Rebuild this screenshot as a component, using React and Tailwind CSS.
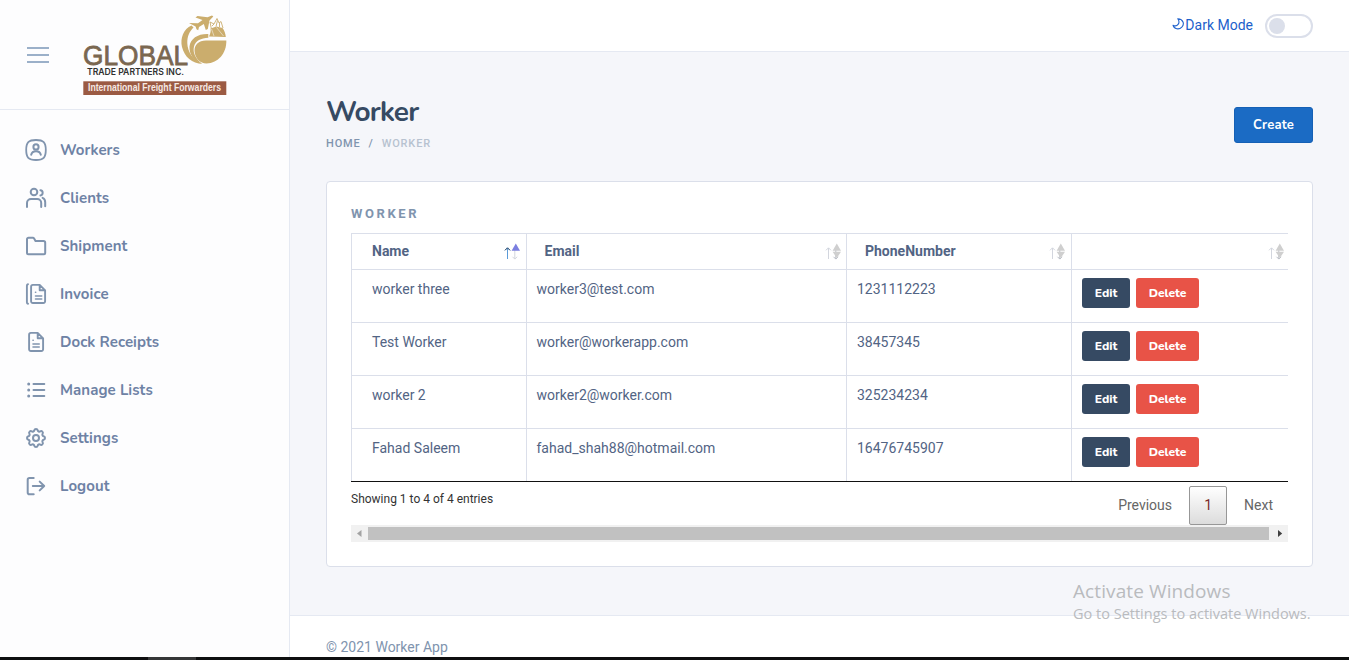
import React from "react";
import { TbSettings } from "react-icons/tb";

const Icon = ({ children }) => (
  <svg width="24" height="24" viewBox="0 0 24 24" fill="none" stroke="#8094ae" strokeWidth="2" strokeLinecap="round" strokeLinejoin="round">
    {children}
  </svg>
);

const DocLines = ({ x }) => (
  <path d={`M${x + 4.3} 10.2h.2M${x + 4.3} 14h6.200M${x + 4.3} 17h6.200`} strokeWidth="1.6" />
);

const NAV = [
  {
    label: "Workers",
    icon: (
      <Icon>
        <path d="M12 2C4.500 2 2.200 4.500 2.200 12s2.300 10 9.800 10 9.800-2.500 9.800-10S19.500 2 12 2Z" strokeWidth="1.8" />
        <circle cx="12" cy="8.900" r="2.600" />
        <path d="M7.200 16.800c.5-2.300 2.300-3.500 4.800-3.500s4.300 1.200 4.800 3.500" />
      </Icon>
    ),
  },
  {
    label: "Clients",
    icon: (
      <Icon>
        <circle cx="10" cy="6" r="3.300" />
        <path d="M3 21V17a4 4 0 0 1 4-4h6.200a4 4 0 0 1 4 4v4M16.400 4.200c3 .3 3 4.800 0 5.200M18.600 11.900c1.900.7 2.600 2.300 2.600 4.300v4" />
      </Icon>
    ),
  },
  {
    label: "Shipment",
    icon: (
      <Icon>
        <path d="M3 18.700V5.300A1.500 1.500 0 0 1 4.500 3.800h4.300a1.500 1.500 0 0 1 1.300.7L11.500 7h8A1.700 1.700 0 0 1 21.200 8.700v10a1.500 1.500 0 0 1-1.500 1.500H4.500A1.500 1.500 0 0 1 3 18.700Z" />
      </Icon>
    ),
  },
  {
    label: "Invoice",
    icon: (
      <Icon>
        <path d="M4 2.200Q2.900 2.400 2.900 3.800v16.400q0 1.400 1.100 1.600M15.700 2.900H8.900A1.800 1.800 0 0 0 7.100 4.700v14.500A1.800 1.800 0 0 0 8.900 21h10.400a1.800 1.800 0 0 0 1.800-1.800V8.300Zm0 0v5.400h5.400" strokeWidth="1.900" />
        <DocLines x={7.2} />
      </Icon>
    ),
  },
  {
    label: "Dock Receipts",
    icon: (
      <Icon>
        <path d="M13.700 2.900H6.900A1.800 1.800 0 0 0 5.100 4.700v14.500A1.800 1.800 0 0 0 6.900 21h10.400a1.800 1.800 0 0 0 1.800-1.800V8.300Zm0 0v5.400h5.400" strokeWidth="1.900" />
        <DocLines x={4.7} />
      </Icon>
    ),
  },
  {
    label: "Manage Lists",
    icon: (
      <Icon>
        <path d="M9.500 6h10.800M9.500 12h10.800M9.500 18h10.800" />
        <path d="M4.700 6h.01M4.700 12h.01M4.700 18h.01" strokeWidth="3" />
      </Icon>
    ),
  },
  {
    label: "Settings",
    icon: <TbSettings size={24} color="#8094ae" strokeWidth={2} />,
  },
  {
    label: "Logout",
    icon: (
      <Icon>
        <path d="M9.700 4H5.500A1.800 1.800 0 0 0 3.700 5.800v12.600a1.800 1.800 0 0 0 1.800 1.800h4.200M8.800 12h11.400M15.700 7.600l4.500 4.400-4.500 4.400" />
      </Icon>
    ),
  },
];

const Logo = () => (
  <svg width="145" height="82" viewBox="0 0 145 82" fontFamily="'Liberation Sans', sans-serif">
    <g fill="#cbad6d">
      <path d="M108.500 10.500C100.500 14 97 23 99 32C101.500 42 109 48.500 119.500 49C110 45 104.500 37 104.300 28C104.200 21 106.500 16.500 110.500 12.500Z" />
      <path d="M125.300 19C115 18.600 107.500 23.500 106.500 31.500C106 39.500 111 46.500 118.500 48.300C112.500 43.500 109.500 37.500 111 31.500C112.500 26 118 23 125.300 22.800Z" />
      <path d="M143.300 25.500H123C115.500 25.500 111.300 30 111.500 36C112 43.500 117 48.400 123.500 48.400C135 48.400 143.800 38 143.300 25.500Z" />
      <path d="M126 21.500C127.500 18.500 128 16 127.500 13.500L133.500 11.500L139.500 13C141.500 15.500 142.500 18.500 142.800 22Z" />
      <path d="M106 8L115 8.300L119.500 5L112.500 2.500L114.500 1L124.500 2.200L129 .6L130.300 1.600L126.500 5.500L124.800 14L122.800 15L120.800 9L116 12L115.200 15.300L113.500 14.300L112.600 11.500Z" />
    </g>
    <path d="M128.300 13.500L127 7L131 9L134 3.500L136 8L138 6.500L140 13M129 11l2-2M133 11.500l1.500-6M136.500 12v-4" stroke="#cbad6d" strokeWidth=".9" fill="none" />
    <path d="M133.500 12.500L140.500 21M128.500 14L131 21" stroke="#fdfdfe" strokeWidth=".5" fill="none" />
    <text x="0" y="50" fontSize="27" fill="#7a6750" stroke="#7a6750" strokeWidth=".8" textLength="105" lengthAdjust="spacingAndGlyphs">GLOBAL</text>
    <text x="4" y="59.500" fontSize="8.800" fontWeight="600" fontFamily="Inter, sans-serif" fill="#303030" textLength="97" lengthAdjust="spacingAndGlyphs">TRADE PARTNERS INC.</text>
    <rect x="0.300" y="66.300" width="143" height="13.700" fill="#9b5a43" />
    <text x="5" y="76" fontSize="10" fontWeight="700" fill="#f6e9e4" textLength="133" lengthAdjust="spacingAndGlyphs">International Freight Forwarders</text>
  </svg>
);

const SortIcon = ({ active }) => (
  <svg width="18" height="18" viewBox="0 0 18 18" fill="none">
    <path d="M4.500 16V5M2 7.300l2.500-2.500L7 7.300" stroke={active ? "#5b9bd8" : "#d3d6de"} />
    {active && <path d="M2 7.300l2.500-2.500L7 7.300" stroke="#364a63" />}
    <path d="M11.800 5v11M9.500 13.800l2.300 2.300 2.300-2.300" stroke={active ? "#d3d6de" : "#b9bdc5"} />
    <path d="M8.600 7.700h8.400L12.800.6Z" fill={active ? "#7b7fe0" : "#cfcfcf"} />
    {!active && <path d="M8.600 8.800h8.400l-4.200 6.200Z" fill="#cfcfcf" />}
  </svg>
);

const ROWS = [
  ["worker three", "worker3@test.com", "1231112223"],
  ["Test Worker", "worker@workerapp.com", "38457345"],
  ["worker 2", "worker2@worker.com", "325234234"],
  ["Fahad Saleem", "fahad_shah88@hotmail.com", "16476745907"],
];

const HEADS = [
  ["Name", "pl-5 pr-[5px]"],
  ["Email", "pl-[17.5px] pr-1"],
  ["PhoneNumber", "pl-[18px] pr-[5px]"],
  ["", "pl-5 pr-[3px]"],
];

export default function App() {
  return (
    <div className="flex h-[660px] w-[1349px] flex-col overflow-hidden bg-[#f5f6fa] font-[Roboto,sans-serif] text-sm text-[#526484]">
      <div className="flex min-h-0 flex-1">
        <aside className="w-[290px] shrink-0 border-r border-[#e5e9f2] bg-[#fdfdfe]">
          <div className="flex h-[110px] border-b border-[#e5e9f2] pt-[15px] pl-[27px]">
            <div className="mt-8 flex w-[22px] flex-col gap-[5px]">
              <span className="h-0.5 bg-[#9bb0c9]" />
              <span className="h-0.5 bg-[#9bb0c9]" />
              <span className="h-0.5 bg-[#9bb0c9]" />
            </div>
            <div className="ml-[34px]">
              <Logo />
            </div>
          </div>
          <nav className="pt-4">
            {NAV.map((n) => (
              <a key={n.label} className="flex h-12 items-center gap-3 pl-6 font-[Nunito,Lato,sans-serif] text-[15px] font-bold tracking-[0.06px] text-[#6e82a5]">
                {n.icon}
                <span className="pt-0.5">{n.label}</span>
              </a>
            ))}
          </nav>
        </aside>

        <div className="flex min-w-0 flex-1 flex-col">
          <header className="flex h-[52px] shrink-0 items-center justify-end border-b border-[#e5e9f2] bg-white pr-9">
            <svg width="12" height="12" viewBox="0 0 12 12" fill="none" stroke="#2263cc" strokeWidth="1.100" strokeLinejoin="round" className="-mt-[3px] mr-px">
              <path d="M5.800 .8C11.300 1.200 12.800 6 9.800 9.200C7 12 2 11.200 1 7.200C5.200 9.300 8.800 5 5.800 .8Z" />
            </svg>
            <span className="-mt-0.5 text-[14px] text-[#1c60cb]">Dark Mode</span>
            <span className="ml-3 flex h-6 w-12 items-center rounded-full border-2 border-[#dbdfea] pl-0.5">
              <span className="size-4 rounded-full bg-[#dbdfea]" />
            </span>
          </header>

          <main className="flex-1 px-9">
            <div className="flex h-[129px] justify-between">
              <div className="pt-[43px]">
                <h1 className="font-[Nunito,Lato,sans-serif] text-[28px] leading-[35px] font-bold tracking-[-0.84px] text-[#364a63]">Worker</h1>
                <div className="mt-1.5 flex text-[11px] leading-4 font-medium tracking-[0.83px]">
                  <span className="text-[#8094ae]">HOME</span>
                  <span className="mx-2 text-[#8094ae]">/</span>
                  <span className="text-[#b7c2d0]">WORKER</span>
                </div>
              </div>
              <button className="mt-[55px] h-9 w-[79px] rounded-[3px] border border-[#1560b5] bg-[#1b6bc4] font-[Nunito,Lato,sans-serif] text-[13px] font-bold tracking-[0.2px] text-white">Create</button>
            </div>

            <section className="h-[386px] rounded border border-[#dbdfea] bg-white px-6 pt-[23px]">
              <h2 className="h-7 text-[13px] leading-[18px] font-bold tracking-[2.6px] text-[#8094ae]">WORKER</h2>
              <div className="border-b border-[#111]">
                <div className="grid h-[37px] grid-cols-[175px_320px_225px_217px] border-y border-[#dbdfea]">
                  {HEADS.map(([h, pad], i) => (
                    <div key={i} className={"flex items-center justify-between border-l border-[#dbdfea] font-bold text-[#526484] " + pad}>
                      <span className="pb-0.5">{h}</span>
                      <SortIcon active={i === 0} />
                    </div>
                  ))}
                </div>
                {ROWS.map((r, i) => (
                  <div key={i} className="grid h-[53px] grid-cols-[175px_320px_225px_217px] border-b border-[#dbdfea] leading-5 last:h-[52px] last:border-b-0">
                    <div className="border-l border-[#dbdfea] pt-[9px] pl-5">{r[0]}</div>
                    <div className="border-l border-[#dbdfea] pt-[9px] pl-[9.5px]">{r[1]}</div>
                    <div className="border-l border-[#dbdfea] pt-[9px] pl-2.5">{r[2]}</div>
                    <div className="flex gap-1.5 border-l border-[#dbdfea] pt-2 pl-2.5 font-[Nunito,Lato,sans-serif] text-[12px] font-extrabold text-white">
                      <button className="h-[30px] w-12 rounded-[3px] bg-[#364a63]">Edit</button>
                      <button className="h-[30px] w-[63px] rounded-[3px] bg-[#e85347]">Delete</button>
                    </div>
                  </div>
                ))}
              </div>
              <div className="flex h-[43px] justify-between pt-1">
                <span className="pt-1 text-[12px] leading-[18px] text-[#333]">Showing 1 to 4 of 4 entries</span>
                <div className="flex h-[39px] items-center text-[#666]">
                  <span className="mr-[17px] pb-0.5">Previous</span>
                  <span className="flex h-[39px] w-[38px] items-center justify-center rounded-[2px] border border-[#979797] bg-linear-to-b from-white to-[#dcdcdc] pb-0.5 text-[#7b2a2a]">1</span>
                  <span className="mr-[15px] ml-[17px] pb-0.5">Next</span>
                </div>
              </div>
              <div className="flex h-[17px] items-center bg-[#f1f1f1]">
                <svg width="17" height="17"><path d="M10.500 5v7L6 8.500Z" fill="#a3a3a3" /></svg>
                <div className="h-[13px] flex-1 bg-[#c1c1c1]" />
                <svg width="19" height="17"><path d="M9 5v7l4.200-3.500Z" fill="#404040" /></svg>
              </div>
            </section>
          </main>

          <footer className="h-[42px] shrink-0 border-t border-[#e5e9f2] bg-white px-9 pt-[21px] leading-5 text-[#8094ae]">© 2021 Worker App</footer>
        </div>
      </div>
      <div className="h-[3px] shrink-0 bg-[#0e0f10] pl-[148px]">
        <div className="h-full w-12 bg-[#353637]" />
      </div>
      <div className="absolute top-[578px] left-[1073px] font-['Segoe_UI','Open_Sans',sans-serif] whitespace-nowrap text-[#b9bbbe]">
        <div className="text-[19px] leading-[26px] tracking-[0.1px]">Activate Windows</div>
        <div className="text-[14.5px] leading-5">Go to Settings to activate Windows.</div>
      </div>
    </div>
  );
}
